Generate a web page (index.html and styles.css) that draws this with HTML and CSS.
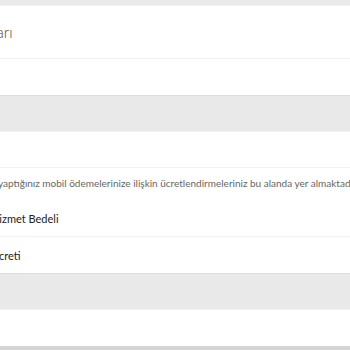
FILE: index.html
```
<!DOCTYPE html>
<html lang="tr">
<head>
  <meta charset="UTF-8" />
  <title>Mobil Ödeme Ayarları</title>
  <link rel="stylesheet" href="styles.css">
</head>
<body>
  <div class="page">

    <!-- başlık kartı -->
    <section class="card">
      <div class="row title-row"><span class="title">Mobil Ödeme Ayarları</span></div>
      <div class="row empty"></div>
    </section>

    <div class="spacer"></div>

    <!-- ücretlendirmeler -->
    <section class="card">
      <div class="row empty head"></div>
      <div class="desc">Hesabınızdan yaptığınız mobil ödemelerinize ilişkin ücretlendirmeleriniz bu alanda yer almaktadır.</div>
      <div class="row item">Hizmet Bedeli</div>
      <div class="row item">Ücreti</div>
    </section>

    <div class="spacer"></div>

    <section class="card last">
      <div class="row empty"></div>
    </section>

  </div>
</body>
</html>
```
FILE: styles.css
```
* {
  box-sizing: border-box;
}
body {
  margin: 0;
  background: #e9e9e9;
  font-family: Lato, "Liberation Sans", sans-serif;
  color: #333;
  overflow: hidden;
}

.page {
  padding-top: 5px;
}

.card {
  background: #fff;
  border-top: 1px solid #f2f2f2;
  border-bottom: 1px solid #dedede;
}

.row {
  display: flex;
  align-items: center;
  height: 36px;
  border-bottom: 1px solid #f1f1f1;
  white-space: nowrap;
  overflow: hidden;
}
.row:last-child {
  border-bottom: none;
}

.title-row {
  height: 53px;
}
.title {
  font-size: 15px;
  font-weight: 300;
  color: #444;
  margin-left: -128px;
}

.head {
  height: 36px;
}

.desc {
  padding-top: 9px;
  font-size: 10px;
  color: #666;
  white-space: nowrap;
  overflow: hidden;
  margin-left: -63px;
  height: 33px;
}

.item {
  font-size: 11px;
  color: #222;
  margin-left: -9px;
}

.spacer {
  height: 35px;
}

.last {
  border-bottom: 4px solid #d5d5d5;
}
```
